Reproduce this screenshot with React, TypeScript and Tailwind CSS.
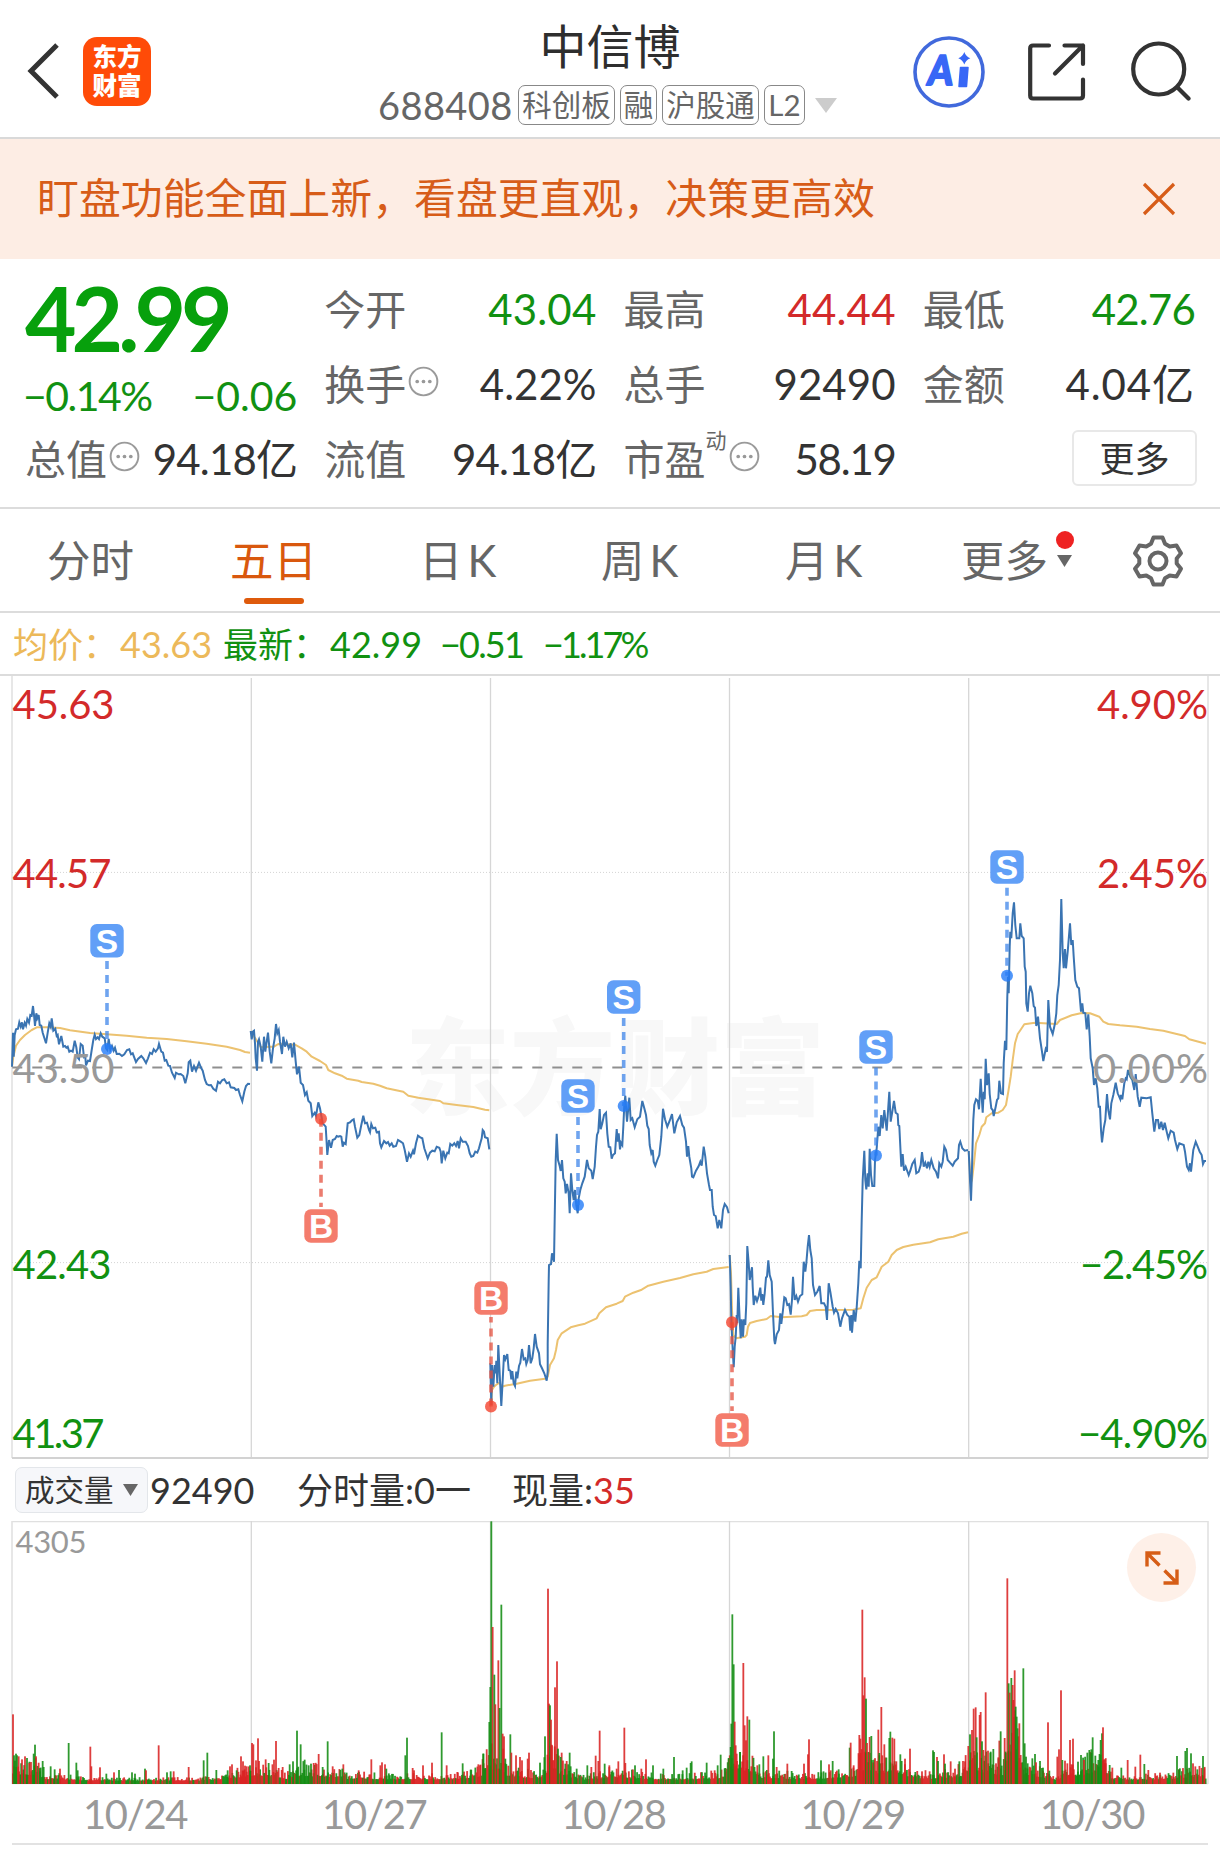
import type { ReactNode } from "react";

const RED = "#d32a2a";
const GREEN = "#119111";

type Trace = { ox: number; oy: number; price: string; avg: string };

// Samples are stored at three units per pixel, relative to each session's origin.
const SESSIONS: Trace[] = [
  {
    ox: 0,
    oy: 900,
    price:
      "36,500 39,398 41,470 44,405 48,388 54,386 58,367 62,380 66,367 69,388 74,368 78,377 82,357 87,368 91,345 95,347 99,318 102,345 105,378 109,340 112,355 116,345 119,375 124,377 128,398 138,430 143,398 148,370 152,380 155,355 160,392 166,386 170,408 173,405 177,433 184,408 190,440 195,438 199,443 203,440 208,455 213,452 218,455 224,422 229,442 233,473 237,478 242,432 248,437 252,472 256,470 258,496 264,482 270,483 275,450 280,420 284,404 288,417 293,412 297,417 302,400 307,410 314,415 318,445 322,450 326,417 331,450 336,438 341,452 345,443 350,462 358,461 366,468 373,463 381,450 388,448 393,463 398,460 408,486 414,477 424,468 430,475 438,489 444,475 450,458 456,462 461,448 467,455 474,445 477,432 484,455 489,458 494,482 499,480 505,497 510,498 516,518 524,534 528,518 536,523 542,522 550,528 556,550 563,520 566,487 571,482 576,515 582,498 588,512 597,488 604,505 608,512 615,540 620,552 627,556 633,555 640,566 648,572 654,545 660,550 667,540 673,538 680,550 687,547 692,562 703,564 708,570 715,568 720,585 727,604 733,575 738,558 744,551 750,552",
    avg: "36,500 40,470 48,437 60,420 75,405 95,390 110,382 140,382 180,384 210,391 270,399 320,403 380,407 440,413 500,417 560,424 620,431 680,440 720,450 735,456 750,458",
  },
  {
    ox: 240,
    oy: 980,
    price:
      "32,153 35,178 38,155 42,152 45,190 47,235 51,272 54,185 57,178 62,200 67,245 72,170 76,215 80,185 84,158 89,215 94,250 99,205 104,175 108,132 112,160 116,150 120,185 126,222 130,170 135,200 140,185 146,205 152,190 157,232 162,188 167,245 171,283 177,260 182,308 189,315 195,345 200,337 205,362 212,370 217,408 224,398 228,408 235,367 240,385 243,402 248,430 257,440 259,470 262,525 267,480 273,503 278,480 285,477 290,468 295,470 300,468 304,470 308,500 312,488 317,492 323,430 330,427 337,420 341,418 345,440 352,473 358,465 364,435 370,407 375,430 381,428 387,450 390,457 394,432 399,445 406,443 410,457 417,455 420,490 424,502 432,483 439,490 444,486 449,497 455,490 460,500 468,498 474,480 482,485 489,490 494,510 501,545 507,520 512,530 519,512 522,523 528,490 534,467 541,472 547,475 553,505 558,520 563,535 570,518 577,512 584,514 590,500 598,503 602,515 605,550 610,512 616,535 622,518 626,520 631,492 637,497 643,490 648,498 653,483 657,505 662,475 668,485 677,485 684,498 689,520 694,530 700,528 706,515 712,518 717,505 721,490 725,475 728,450 732,455 735,472 743,475 748,508",
    avg: "32,153 38,165 46,175 55,190 62,202 75,201 90,200 102,200 115,192 165,194 185,205 200,215 215,230 240,243 258,255 265,270 285,280 305,287 320,296 355,302 365,306 400,311 420,317 440,325 490,335 505,347 535,353 600,363 610,370 650,375 700,381 735,389 748,391",
  },
  {
    ox: 480,
    oy: 960,
    price:
      "31,1210 34,1335 36,1215 40,1280 44,1215 47,1240 49,1202 52,1270 55,1155 60,1260 64,1338 68,1260 72,1185 76,1198 82,1182 86,1230 91,1232 94,1258 97,1233 101,1270 105,1278 109,1235 112,1255 117,1218 121,1208 126,1167 131,1198 136,1195 139,1212 143,1200 147,1155 152,1210 157,1195 161,1165 165,1122 170,1160 177,1180 180,1213 186,1225 193,1240 200,1262 203,1235 203,1150 206,960 207,915 213,912 216,880 222,905 224,775 227,600 230,521 234,600 239,618 242,633 246,600 250,655 254,665 257,700 261,672 266,700 269,760 273,640 277,690 281,720 285,690 289,735 293,760 296,715 301,690 307,670 314,650 321,600 326,625 334,632 338,657 344,620 348,560 351,525 355,515 359,447 362,508 367,490 372,465 378,458 382,520 386,560 391,562 395,596 399,585 405,580 410,507 413,545 416,520 420,568 423,548 427,555 430,500 433,435 436,407 441,485 448,413 452,480 457,475 464,502 472,478 480,470 487,423 493,445 498,465 502,497 506,507 509,555 514,580 518,570 521,605 526,617 532,600 538,585 544,530 549,446 555,478 562,500 569,482 576,462 583,520 590,487 600,468 607,495 612,503 618,545 621,590 625,558 628,590 634,625 636,650 640,652 648,632 656,618 661,605 665,617 671,560 676,590 681,640 687,675 690,690 695,690 698,740 702,765 707,768 713,805 718,780 724,805 729,750 734,732 741,742 746,760",
    avg: "34,1335 36,1290 42,1280 48,1275 58,1268 66,1280 75,1277 110,1271 150,1262 195,1256 203,1250 210,1215 222,1195 228,1170 233,1140 245,1120 272,1102 295,1096 315,1091 350,1075 358,1060 378,1042 410,1031 428,1023 435,1010 460,998 485,989 505,977 550,965 600,954 640,943 680,935 700,927 746,921",
  },
  {
    ox: 720,
    oy: 1020,
    price:
      "29,705 32,800 34,900 38,990 41,1042 44,980 47,950 50,885 52,910 55,803 59,900 62,955 65,898 69,950 72,898 76,915 79,850 82,678 86,730 89,780 96,742 98,800 101,855 106,827 111,843 116,828 121,803 124,842 127,822 130,855 134,820 138,772 141,770 145,721 149,765 155,785 159,880 163,960 165,972 170,943 177,930 181,880 184,912 189,870 193,832 197,835 202,855 207,852 212,884 216,840 219,770 224,840 229,828 234,845 240,828 247,823 251,725 256,755 259,730 263,680 267,645 271,690 275,715 279,795 285,825 292,815 299,798 304,850 312,850 317,860 321,900 326,790 331,815 338,860 342,878 347,867 354,880 361,920 366,895 375,870 382,885 388,890 391,932 394,885 396,938 401,870 406,905 410,862 415,790 418,722 422,745 425,600 428,480 433,392 436,480 439,508 443,460 446,500 449,386 453,465 457,498 463,498 465,420 470,385 475,320 479,348 484,285 488,325 493,270 500,332 508,215 512,305 517,275 522,243 527,278 533,283 535,315 538,318 544,440 548,402 552,452 557,440 566,465 571,452 577,432 584,420 589,460 596,455 602,435 606,396 611,440 616,428 621,445 625,425 629,440 634,420 641,445 648,455 654,475 658,430 664,440 668,425 673,380 678,390 683,420 690,428 698,437 704,425 714,415 717,375 721,365 727,385 734,392 744,390",
    avg: "29,705 33,760 36,870 40,945 48,955 75,950 80,945 84,920 90,909 110,903 140,897 152,888 185,892 245,889 260,885 270,873 290,870 400,869 422,865 430,835 440,803 455,780 470,772 485,740 505,725 515,705 530,690 550,681 580,674 630,667 655,658 700,650 725,641 744,637",
  },
  {
    ox: 960,
    oy: 830,
    price:
      "26,963 30,1050 33,1112 35,1050 38,930 40,870 43,825 48,808 53,812 57,838 62,746 65,800 68,848 71,785 74,808 77,686 81,765 86,730 89,792 94,835 98,840 101,858 107,830 111,810 115,805 118,752 123,790 129,792 131,700 135,632 139,660 142,500 144,440 146,490 149,350 151,305 154,325 158,250 162,217 166,285 170,325 178,325 181,280 185,318 191,325 194,410 197,425 199,520 203,545 207,490 211,467 217,490 221,528 225,533 229,588 234,560 240,625 246,665 250,693 257,657 261,665 265,510 270,590 278,612 285,580 289,550 292,495 296,465 300,390 304,207 308,370 311,415 315,357 318,415 323,365 326,328 330,280 334,345 338,330 341,380 346,450 352,470 357,475 360,510 363,545 367,520 370,548 376,550 380,598 385,553 389,620 392,685 398,715 402,765 407,745 412,775 416,830 420,830 423,900 426,937 431,895 436,870 441,792 445,840 450,868 454,820 460,795 467,758 473,790 481,808 483,795 487,808 493,760 497,745 500,748 504,720 511,740 517,750 523,780 527,732 533,800 539,830 544,803 560,805 572,802 577,850 583,905 588,870 594,870 598,897 604,875 609,900 614,878 620,905 625,925 632,902 641,908 645,930 652,957 658,940 671,945 675,965 681,1010 686,1020 690,1000 693,1025 700,960 707,935 713,950 719,965 725,975 729,1002 733,993 738,993",
    avg: "26,963 32,1060 36,1050 42,1000 48,940 58,915 65,890 75,880 79,862 95,850 115,848 128,840 138,825 145,785 152,740 158,690 165,640 173,612 180,602 193,583 225,578 290,582 300,570 335,556 365,549 390,550 418,560 430,575 445,582 480,586 530,590 570,597 610,602 650,612 675,618 688,628 710,634 738,641",
  },
];

const toPoints = (raw: string, ox: number, oy: number) =>
  raw
    .split(" ")
    .map((p) => {
      const [x, y] = p.split(",").map(Number);
      return `${(ox + x / 3).toFixed(1)},${(oy + y / 3).toFixed(1)}`;
    })
    .join(" ");

// Volume peaks: x, y, direction (r = up, g = down).
const PEAKS: { ox: number; base: number; raw: string }[] = [
  {
    ox: 0,
    base: 1031,
    raw: "39,822,r;42,945,g;48,940,g;56,948,r;66,957,r;75,948,r;81,953,g;88,968,r;93,965,r;101,940,g;105,913,g;108,948,r;120,993,g;128,962,g;131,980,g;152,978,g;164,987,g;180,985,r;206,908,g;229,967,g;233,990,g;271,919,r;274,978,r;300,981,r;319,1000,g;342,996,r;357,989,g;396,996,g;405,1000,g;435,985,g;438,990,r;476,915,r;501,996,g;512,993,g;521,993,r;566,980,r;611,960,g;622,937,g;649,989,g;683,990,g;690,978,r;696,972,r;710,990,g;723,948,r;729,963,r;735,976,r;740,978,r;750,975,g;756,908,r;760,912,r;768,960,r;774,894,r;777,962,r;797,957,r;806,968,g;822,958,r;828,902,r;848,980,r;869,972,g;879,963,g;891,871,g;902,912,g;914,958,g;926,975,g;933,970,g;941,968,r;956,941,r;968,980,g;983,903,g;998,978,r;1030,972,r;1027,985,g;1076,990,r;1114,957,r;1141,975,r;1146,966,r;1155,972,r;1159,985,g;1216,945,g;1221,892,g;1238,983,r;1242,990,r;1269,975,r;1296,967,r;1325,876,g;1340,975,r;1372,995,r;1388,969,g;1412,988,g;1435,972,r;1450,940,g;1456,983,g;1440,975,r",
  },
  {
    ox: 480,
    base: 1031,
    raw: "10,940,g;15,985,g;28,845,g;31,740,g;34,243,g;38,560,r;43,703,g;46,792,r;55,660,r;59,803,g;64,493,g;68,880,r;72,888,r;76,955,g;91,882,g;94,937,r;108,945,r;120,950,r;126,960,r;143,955,r;147,937,r;180,967,g;195,888,g;204,445,r;207,790,r;210,795,g;213,838,r;216,915,r;221,960,r;225,741,r;231,663,r;234,925,g;245,937,r;242,950,g;256,970,g;260,962,r;269,937,g;272,978,g;290,985,g;322,975,g;334,980,r;347,946,r;355,962,r;359,871,r;374,970,g;388,975,r;410,985,r;415,963,r;433,862,r;436,968,r;465,975,g;484,985,r;498,957,r;519,975,g;550,985,g;582,950,g;608,990,g;620,982,g;632,968,g;635,963,g;680,967,g;704,990,r;713,975,g;722,943,g;736,983,g;746,953,g;752,920,g;754,850,g;757,522,g;761,672,g;764,844,r;767,915,r;770,940,r;780,935,g;790,668,r;794,855,r;798,900,r;802,828,r;808,838,g;814,978,r;832,975,r;838,972,g;850,948,g;865,945,r;882,873,g;879,955,g;890,980,r;922,970,r;935,992,g;972,970,r;984,942,r;987,897,r;1023,960,g;1047,972,r;1058,962,g;1076,987,g;1109,922,g;1112,907,r;1121,975,r;1138,884,r;1141,895,r;1147,508,r;1150,765,r;1154,711,r;1158,775,g;1161,908,r;1169,890,r;1174,887,g;1195,868,r;1198,938,g;1204,800,r;1207,945,r;1213,912,r;1228,893,g;1231,874,g;1237,892,r;1243,895,r;1249,963,r;1261,942,g;1265,962,g;1275,955,r;1290,925,r;1306,995,g;1326,993,r;1359,930,g;1362,935,g;1371,950,r;1374,962,g;1392,942,r;1395,970,g;1412,963,r;1425,985,r;1438,963,g;1449,962,r;1455,963,r",
  },
  {
    ox: 960,
    base: 852,
    raw: "25,738,r;30,703,g;36,690,r;41,626,r;47,622,r;50,712,g;59,645,r;62,636,r;66,724,g;70,750,r;77,577,r;84,752,r;92,755,g;100,747,g;108,790,r;115,772,r;118,722,r;122,694,g;134,714,r;137,755,g;142,235,r;146,550,g;149,578,r;154,534,g;158,555,r;160,600,r;164,511,r;167,620,g;170,650,g;173,685,g;178,670,r;182,765,r;190,505,g;194,730,g;198,770,g;203,790,g;217,775,g;225,762,g;228,787,r;240,783,g;249,803,g;264,667,r;268,812,g;292,770,r;297,748,r;303,571,r;307,780,g;315,782,r;322,790,r;330,720,r;339,716,r;334,793,r;354,785,g;363,765,g;372,780,r;382,758,g;388,750,g;394,748,g;398,712,g;406,767,g;415,780,g;422,720,g;426,700,g;429,682,r;433,790,r;437,790,r;449,795,g;457,803,r;484,803,g;503,780,r;526,800,r;541,764,r;553,792,g;565,810,r;600,818,r;640,818,r;651,768,g;657,808,g;676,753,g;681,744,g;693,760,g;699,790,r;712,808,g;729,768,g;733,805,r",
  },
];

// Typical bar height along the time axis: x, height.
const LEVELS: [number, number][] = [
  [12, 28], [35, 24], [45, 10], [70, 8], [85, 5], [150, 5], [200, 5], [228, 11], [250, 22], [275, 20], [285, 10],
  [300, 22], [325, 18], [345, 11], [400, 9], [450, 9], [480, 18], [489, 45], [502, 40], [508, 16], [525, 14],
  [540, 13], [549, 44], [558, 30], [572, 14], [585, 8], [612, 17], [640, 11], [665, 8], [700, 10], [722, 13],
  [732, 45], [750, 34], [760, 14], [800, 10], [830, 13], [852, 16], [866, 48], [878, 30], [895, 32], [912, 15],
  [930, 11], [960, 19], [968, 40], [988, 30], [1002, 24], [1008, 80], [1016, 72], [1022, 26], [1045, 15],
  [1056, 5], [1064, 20], [1075, 20], [1090, 31], [1104, 32], [1112, 10], [1125, 7], [1150, 9], [1170, 11],
  [1190, 17], [1204, 17],
];

const levelAt = (x: number) => {
  for (let i = 1; i < LEVELS.length; i++) {
    const [x1, h1] = LEVELS[i];
    if (x <= x1) {
      const [x0, h0] = LEVELS[i - 1];
      return h0 + ((h1 - h0) * (x - x0)) / (x1 - x0);
    }
  }
  return 10;
};

type Bar = { x: number; h: number; up: boolean };

const bars: Bar[] = (() => {
  let s = 7919;
  const rnd = () => {
    s = (s * 1103515245 + 12345) % 2147483648;
    return s / 2147483648;
  };
  const out: Bar[] = [];
  let up = true;
  for (let x = 12; x < 1205; x += 1.03) {
    if (rnd() < 0.36) up = !up;
    const r = rnd();
    out.push({ x, h: 2 + levelAt(x) * (0.28 + 0.72 * r * r), up });
  }
  for (const g of PEAKS)
    for (const p of g.raw.split(";")) {
      const [x, y, c] = p.split(",");
      out.push({ x: g.ox + Number(x) / 3 - 0.9, h: (g.base - Number(y)) / 3, up: c === "r" });
    }
  return out;
})();

const MARKERS: { k: "S" | "B"; x: number; box: number; dot: number }[] = [
  { k: "S", x: 107, box: 940.7, dot: 1049 },
  { k: "B", x: 321, box: 1226, dot: 1118.7 },
  { k: "B", x: 491, box: 1298, dot: 1406.5 },
  { k: "S", x: 578, box: 1096, dot: 1205 },
  { k: "S", x: 623.7, box: 997, dot: 1106 },
  { k: "B", x: 732, box: 1430, dot: 1322.3 },
  { k: "S", x: 876, box: 1047, dot: 1155.5 },
  { k: "S", x: 1007, box: 867, dot: 975.7 },
];

const AXIS = [
  { y: 704, l: "45.63", r: "4.90%", c: RED, lw: 100, rw: 111 },
  { y: 873, l: "44.57", r: "2.45%", c: RED, lw: 97, rw: 111 },
  { y: 1068, l: "43.50", r: "0.00%", c: "#999999", lw: 100, rw: 115 },
  { y: 1264.5, l: "42.43", r: "-2.45%", c: GREEN, lw: 97, rw: 128 },
  { y: 1433, l: "41.37", r: "-4.90%", c: GREEN, lw: 90, rw: 130 },
];

const COLS = [251.3, 490.5, 729.5, 968.7];

function PriceChart() {
  return (
    <svg viewBox="0 676 1220 783" className="block h-[783px] w-full shrink-0">
      <g fontFamily="'Noto Sans CJK SC', sans-serif" fontWeight="900" fontSize="105" fill="#f8f8f8">
        <text x="405" y="1106" textLength="420">东方财富</text>
      </g>
      <g stroke="#d6d6d6" strokeWidth="1.3">
        {COLS.map((x) => (
          <line key={x} x1={x} x2={x} y1="678" y2="1458" />
        ))}
      </g>
      <path d="M12 676V1458M1208 676V1458" stroke="#e2e2e2" strokeWidth="1.6" />
      <path d="M12 1458H1208" stroke="#d2d2d2" strokeWidth="2" />
      <path d="M12 872.4H1208M12 1262.6H1208" stroke="#d4d4d4" strokeWidth="1" strokeDasharray="1 2" />
      <path d="M12.3 1067.4H1208" stroke="#8f8f8f" strokeWidth="2" strokeDasharray="10 10" />
      <g fill="none" strokeLinejoin="round">
        {SESSIONS.map((d) => (
          <g key={d.ox}>
            <polyline points={toPoints(d.avg, d.ox, d.oy)} stroke="#ecc270" strokeWidth="2" />
            <polyline points={toPoints(d.price, d.ox, d.oy)} stroke="#3a74b2" strokeWidth="2" strokeLinejoin="miter" />
          </g>
        ))}
      </g>
      {MARKERS.map((m) => {
        const down = m.dot > m.box;
        const from = m.box + (down ? 19 : -19);
        const s = m.k === "S";
        return (
          <g key={`${m.x}`}>
            <line
              x1={m.x}
              x2={m.x}
              y1={m.dot}
              y2={from}
              stroke={s ? "#3f86ea" : "#e4503f"}
              strokeOpacity="0.75"
              strokeWidth="3.6"
              strokeDasharray="8 6"
              strokeDashoffset={s ? 4 : 0}
            />
            <circle cx={m.x} cy={m.dot} r="6" fill={s ? "#247cf8" : "#f4442e"} fillOpacity="0.8" />
            <rect
              x={m.x - 16.7}
              y={m.box - 16.7}
              width="33.4"
              height="33.4"
              rx="6.5"
              fill={s ? "#619ff7" : "#f47c6c"}
            />
            <text
              x={m.x}
              y={m.box + 12}
              textAnchor="middle"
              fontFamily="'Liberation Sans', sans-serif"
              fontWeight="700"
              fontSize="33.5"
              fill="#ffffff"
            >
              {m.k}
            </text>
          </g>
        );
      })}
      <g fontFamily="Lato, sans-serif" fontSize="40">
        {AXIS.map((a) => (
          <g key={a.y} fill={a.c}>
            <text x="12.5" y={a.y + 14.8} textLength={a.lw + 2}>{a.l}</text>
            <text x={1208 - a.rw} y={a.y + 14.8} textLength={a.rw}>{a.r.replace("-", "−")}</text>
          </g>
        ))}
      </g>
    </svg>
  );
}

function VolumeChart() {
  return (
    <div className="relative h-[264px] shrink-0">
      <svg viewBox="0 1521 1220 264" className="block h-full w-full">
        <path d="M12 1521.5H1208M12 1783.5H1208" stroke="#e0e0e0" strokeWidth="1.4" />
        <path d="M12 1521V1784M1208 1521V1784" stroke="#e2e2e2" strokeWidth="1.6" />
        <g stroke="#d6d6d6" strokeWidth="1.3">
          {COLS.map((x) => (
            <line key={x} x1={x} x2={x} y1="1521" y2="1784" />
          ))}
        </g>
        {bars.map((b, i) => (
          <rect
            key={i}
            x={b.x}
            y={1784 - b.h}
            width="1.8"
            height={b.h}
            fill={b.up ? "#d92323" : "#128c12"}
            fillOpacity="0.88"
          />
        ))}
        <text x="15.5" y="1552.5" fontFamily="Lato, sans-serif" fontSize="31" fill="#999999" textLength="71">
          4305
        </text>
      </svg>
      <button className="absolute top-[12px] right-[24px] flex size-[69px] items-center justify-center rounded-full bg-[#fef0e8]">
        <svg viewBox="0 0 34 34" className="size-[34px]" fill="none" stroke="#d65d16" strokeWidth="3.4">
          <path d="M2 15.5V2H15.5M2.5 2.5L14.5 14.5M32 18.5V32H18.5M31.5 31.5L19.5 19.5" />
        </svg>
      </button>
    </div>
  );
}

function Dots() {
  return (
    <svg viewBox="0 0 32 32" className="-mt-[6px] ml-[2px] size-[31px] shrink-0" fill="#999999">
      <circle cx="16" cy="16" r="14.3" fill="none" stroke="#9a9a9a" strokeWidth="2" />
      <circle cx="9.5" cy="16" r="1.9" />
      <circle cx="16" cy="16" r="1.9" />
      <circle cx="22.5" cy="16" r="1.9" />
    </svg>
  );
}

type StatProps = { label: string; value: string; tone?: string; spacing?: string; extra?: ReactNode };

function Stat({ label, value, tone = "text-[#333333]", spacing = "tracking-normal", extra }: StatProps) {
  return (
    <div className="flex h-[75px] items-center whitespace-nowrap">
      <span className="text-[41px] text-[#666666]">{label}</span>
      {extra}
      <span className={`ml-auto text-[42px] ${spacing} ${tone}`}>{value}</span>
    </div>
  );
}

function Tag({ children, w }: { children: string; w: string }) {
  return (
    <span className={`flex h-[40px] items-center justify-center rounded-[7px] border-[1.5px] border-[#888888] text-[29.5px] leading-none text-[#666666] ${w}`}>
      {children}
    </span>
  );
}

function Header() {
  return (
    <header className="relative flex h-[139px] shrink-0 items-center border-b-2 border-[#d9d9d9]">
      <svg viewBox="0 0 34 58" className="mt-[5px] ml-[26px] h-[58px] w-[34px]" fill="none" stroke="#333333" strokeWidth="5">
        <path d="M31 3L5 29L31 55" />
      </svg>
      <div className="mt-[5px] ml-[23px] flex h-[69px] w-[68px] flex-col items-center justify-center rounded-[14px] bg-[#ff4b08] text-[24.5px] leading-[29px] font-black text-white">
        <span>东方</span>
        <span>财富</span>
      </div>
      <div className="absolute inset-x-[370px] top-0 flex flex-col">
        <h1 className="mt-[11px] h-[70px] text-center text-[47px] leading-[70px] text-[#2e2e2e]">中信博</h1>
        <div className="mt-[3px] ml-[8px] flex h-[42px] items-center gap-[5px] whitespace-nowrap">
          <span className="w-[135px] text-[38px] leading-none tracking-[0.4px] text-[#666666]">688408</span>
          <Tag w="w-[97px]">科创板</Tag>
          <Tag w="w-[37px]">融</Tag>
          <Tag w="w-[97px]">沪股通</Tag>
          <Tag w="w-[41px]">L2</Tag>
          <svg viewBox="0 0 22 15" className="ml-[5px] h-[15px] w-[22px]">
            <path d="M0 0H22L11 15Z" fill="#cccccc" />
          </svg>
        </div>
      </div>
      <div className="mt-[6px] mr-[29px] ml-auto flex items-center">
        <svg viewBox="0 0 72 72" className="size-[72px]">
          <circle cx="36" cy="36" r="34" fill="none" stroke="#4169dc" strokeWidth="3.6" />
          <text
            transform="translate(13.5 49) skewX(-7)"
            textLength="25"
            lengthAdjust="spacingAndGlyphs"
            fontFamily="Lato, sans-serif"
            fontWeight="900"
            fontSize="41"
            fill="#3867f6"
            stroke="#3867f6"
            strokeWidth="2"
            strokeLinejoin="round"
          >
            A
          </text>
          <path d="M47.5 31.5H55L53.5 50.500H46Z" fill="#3867f6" stroke="#3867f6" strokeWidth="1.500" strokeLinejoin="round" />
          <path d="M51.300 16Q52.800 20.500 57.300 22.300Q52.800 24 51.300 28.500Q49.800 24 45.300 22.300Q49.800 20.500 51.300 16Z" fill="#3867f6" />
        </svg>
        <svg viewBox="0 0 60 60" className="ml-[42px] size-[60px]" fill="none" stroke="#333333" strokeWidth="4.2" strokeLinejoin="round" strokeLinecap="round">
          <path d="M22 3.500H6Q3.200 3.500 3.200 6.300V53.500Q3.200 56.500 6 56.500H53Q56 56.500 56 53.500V37.500M37.500 3.500H56V22M56 3.500L28 31.500" />
        </svg>
        <svg viewBox="0 0 62 62" className="-mt-[4px] ml-[42px] size-[62px]" fill="none" stroke="#333333" strokeWidth="4.2">
          <circle cx="29.7" cy="30" r="25.5" />
          <path d="M48.500 48.500L59.500 59.500" strokeLinecap="round" />
        </svg>
      </div>
    </header>
  );
}

function Tabs() {
  const base = "h-full flex items-center";
  return (
    <nav className="flex h-[104px] shrink-0 items-center border-b-2 border-[#dcdcdc] pt-[2px] text-[43.5px] whitespace-nowrap text-[#666666]">
      <span className={`${base} ml-[47px] w-[183px]`}>分时</span>
      <span className={`${base} relative w-[189px] text-[#d9580e]`}>
        五日
        <i className="absolute bottom-[7px] left-[14px] h-[6px] w-[60px] rounded-full bg-[#de5a0c]" />
      </span>
      <span className={`${base} w-[182px]`}>日<b className="ml-[5px] font-normal">K</b></span>
      <span className={`${base} w-[184px]`}>周<b className="ml-[5px] font-normal">K</b></span>
      <span className={`${base} w-[176px]`}>月<b className="ml-[5px] font-normal">K</b></span>
      <span className={`${base} relative w-[171px]`}>
        更多
        <i className="absolute top-[20px] left-[95px] size-[18px] rounded-full bg-[#ee2222]" />
        <svg viewBox="0 0 15 12" className="absolute top-[44px] left-[96px] h-[12px] w-[15px]">
          <path d="M0 0H15L7.5 12Z" fill="#666666" />
        </svg>
      </span>
      <svg viewBox="0 0 52 52" className="size-[52px]" fill="none" stroke="#666666" strokeWidth="4" strokeLinejoin="round">
        <path d="M21.5 2.5H30.5L33 8.8L37.7 11.5L44.5 10.5L49 18.3L44.7 23.5V28.5L49 33.7L44.5 41.5L37.7 40.5L33 43.2L30.5 49.5H21.5L19 43.2L14.3 40.5L7.5 41.5L3 33.7L7.3 28.5V23.5L3 18.3L7.5 10.5L14.3 11.5L19 8.8Z" />
        <circle cx="26" cy="26" r="8.5" />
      </svg>
    </nav>
  );
}

export default function App() {
  return (
    <main className="flex h-[1862px] w-[1220px] flex-col overflow-hidden bg-white font-[Lato,'Noto_Sans_CJK_SC',sans-serif]">
      <Header />

      <div className="flex h-[120px] shrink-0 items-center justify-between bg-[#fdede4] pr-[44px] pl-[37px]">
        <span className="text-[41.9px] leading-none text-[#d75c18]">盯盘功能全面上新，看盘更直观，决策更高效</span>
        <svg viewBox="0 0 34 34" className="size-[34px]" fill="none" stroke="#d75c18" strokeWidth="3.2">
          <path d="M2 2L32 32M32 2L2 32" />
        </svg>
      </div>

      <section className="grid h-[250px] shrink-0 grid-cols-4 gap-x-[27px] border-b-2 border-[#dcdcdc] pt-[13px] pr-[25px] pl-[25px]">
        <div>
          <div className="h-[96px] text-[89px] leading-[92px] font-bold tracking-[-5px] text-[#07a00c]">42.99</div>
          <div className="flex h-[54px] items-center justify-between pt-[2px] text-[41px] text-[#119111]">
            <span className="-ml-[2px] tracking-[-1.5px]">−0.14%</span>
            <span>−0.06</span>
          </div>
          <Stat label="总值" value="94.18亿" spacing="tracking-[-0.8px]" extra={<Dots />} />
        </div>
        <div>
          <Stat label="今开" value="43.04" tone="text-[#119111]" spacing="tracking-[0.2px]" />
          <Stat label="换手" value="4.22%" extra={<Dots />} />
          <Stat label="流值" value="94.18亿" spacing="tracking-[-0.8px]" />
        </div>
        <div>
          <Stat label="最高" value="44.44" tone="text-[#d32a2a]" spacing="tracking-[0.2px]" />
          <Stat label="总手" value="92490" spacing="tracking-[0.1px]" />
          <Stat
            label="市盈"
            value="58.19"
            spacing="tracking-[-1.2px]"
            extra={
              <>
                <span className="-mt-[40px] text-[21px] text-[#666666]">动</span>
                <Dots />
              </>
            }
          />
        </div>
        <div>
          <Stat label="最低" value="42.76" tone="text-[#119111]" spacing="tracking-[-0.8px]" />
          <Stat label="金额" value="4.04亿" spacing="tracking-[0.9px]" />
          <div className="flex h-[75px] items-start justify-end pt-[8px]">
            <button className="-mr-[2px] flex h-[56px] w-[125px] items-center justify-center rounded-[6px] border-2 border-[#e8e8e8] text-[35px] text-[#333333]">
              更多
            </button>
          </div>
        </div>
      </section>

      <Tabs />

      <div className="flex h-[63px] shrink-0 items-center border-b-2 border-[#dcdcdc] pt-[1px] pl-[13px] text-[35px] whitespace-nowrap text-[#119111]">
        <span className="w-[107px] text-[#ecb95a]">均价：</span>
        <span className="w-[103px] text-[36px] text-[#ecb95a]">43.63</span>
        <span className="w-[107px]">最新：</span>
        <span className="w-[110px] text-[36px]">42.99</span>
        <span className="w-[103px] text-[36px] tracking-[-1.8px]">−0.51</span>
        <span className="text-[36px] tracking-[-2.9px]">−1.17%</span>
      </div>

      <PriceChart />

      <div className="flex h-[62px] shrink-0 items-center pl-[15px] text-[36px] whitespace-nowrap text-[#333333]">
        <button className="flex h-[46px] w-[133px] items-center rounded-[7px] border border-[#e3e6ea] bg-[#f6f7fa] pl-[9px] text-[29.5px]">
          成交量
          <svg viewBox="0 0 15 12" className="ml-[9px] h-[12px] w-[15px]">
            <path d="M0 0H15L7.5 12Z" fill="#666666" />
          </svg>
        </button>
        <span className="ml-[2px] w-[147px]">92490</span>
        <span className="w-[215px]">分时量:0一</span>
        <span>
          现量:<span className="text-[#d32a2a]">35</span>
        </span>
      </div>

      <VolumeChart />

      <div className="mx-[12px] grid h-[60px] shrink-0 grid-cols-5 border-b-2 border-[#e2e2e2] text-center text-[40px] leading-[59px] text-[#999999]">
        {["10/24", "10/27", "10/28", "10/29", "10/30"].map((d) => (
          <span key={d} className="pl-[7px] tracking-[-1.3px]">
            {d}
          </span>
        ))}
      </div>
    </main>
  );
}
